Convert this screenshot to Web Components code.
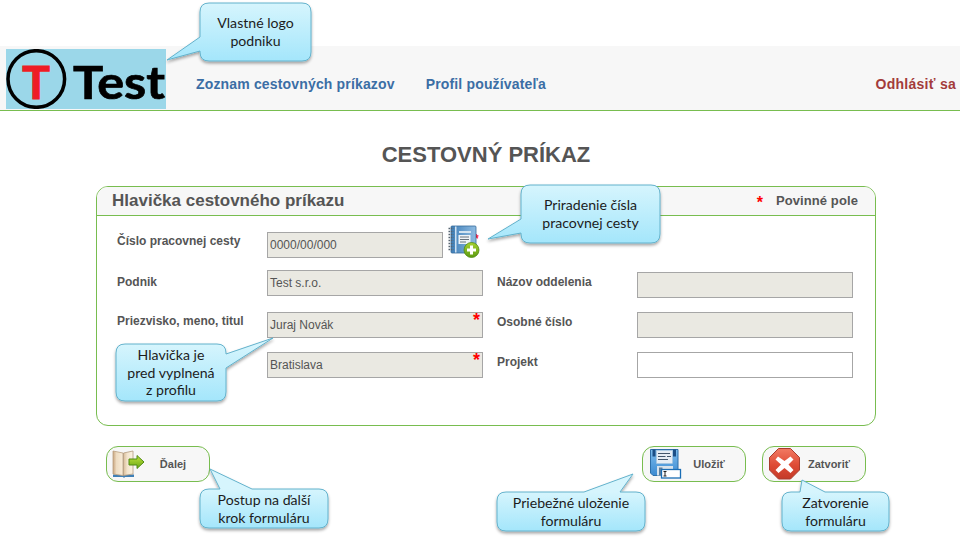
<!DOCTYPE html>
<html lang="sk"><head><meta charset="utf-8"><title>Cestovný príkaz</title>
<style>
html,body{margin:0;padding:0;background:#fff}
body{width:960px;height:544px;overflow:hidden;position:relative;font-family:"Liberation Sans",Arial,sans-serif;color:#555}
</style></head><body>
<x-header>
  <x-logo slot="logo"></x-logo>
  <x-navlink>Zoznam cestovných príkazov</x-navlink>
  <x-navlink>Profil používateľa</x-navlink>
  <x-navlink slot="end" tone="red">Odhlásiť sa</x-navlink>
</x-header>
<x-title>CESTOVNÝ PRÍKAZ</x-title>
<x-panel heading="Hlavička cestovného príkazu" note="Povinné pole">
  <x-row style="margin-top:16px">
    <x-label offset="-4">Číslo pracovnej cesty</x-label>
    <x-assign><x-field>0000/00/000</x-field></x-assign>
  </x-row>
  <x-row style="margin-top:12px">
    <x-label offset="-1">Podnik</x-label><x-field>Test s.r.o.</x-field>
    <x-label offset="-1" style="margin-left:14px">Názov oddelenia</x-label><x-field style="margin-top:2px"></x-field>
  </x-row>
  <x-row style="margin-top:16px">
    <x-label offset="-4">Priezvisko, meno, titul</x-label><x-field required>Juraj Novák</x-field>
    <x-label offset="-3" style="margin-left:14px">Osobné číslo</x-label><x-field></x-field>
  </x-row>
  <x-row style="margin-top:14px">
    <x-label></x-label><x-field required>Bratislava</x-field>
    <x-label offset="-3" style="margin-left:14px">Projekt</x-label><x-field plain></x-field>
  </x-row>
</x-panel>
<x-actions>
  <x-button label="Ďalej"><svg width="36" height="28" viewBox="0 0 36 28" style="margin-left:-1px">
    <defs><linearGradient id="p" x1="0" x2="1" y1="0" y2="0"><stop offset="0" stop-color="#c9a57f"/><stop offset=".35" stop-color="#eedcc2"/><stop offset="1" stop-color="#f8ecd9"/></linearGradient>
    <linearGradient id="p2" x1="0" x2="1" y1="0" y2="0"><stop offset="0" stop-color="#d9bd9a"/><stop offset=".4" stop-color="#f3e4cd"/><stop offset="1" stop-color="#fbf3e4"/></linearGradient>
    <linearGradient id="a" x1="0" x2="0" y1="0" y2="1"><stop offset="0" stop-color="#bfe23c"/><stop offset="1" stop-color="#6aa814"/></linearGradient></defs>
    <path d="M1 24.500h21V27H13l-1 1-1-1H1z" fill="#3f7fb5"/>
    <path d="M1 1 11 3v22.500L1 24z" fill="url(#p)" stroke="#b99f80" stroke-width=".8"/>
    <path d="M11.500 3 21 1v23l-9.500 1.500z" fill="url(#p2)" stroke="#b39a7d" stroke-width=".8"/>
    <path d="M17 9h8V5.500L32 12l-7 6.500V15h-8z" fill="url(#a)" stroke="#4f8a12" stroke-width="1"/>
  </svg></x-button>
  <x-button label="Uložiť" style="margin-left:auto"><svg width="32" height="30" viewBox="0 0 32 30" style="margin-left:1px">
    <defs><linearGradient id="f" x1="0" x2="0" y1="0" y2="1"><stop offset="0" stop-color="#7cbcec"/><stop offset="1" stop-color="#3d8bd2"/></linearGradient></defs>
    <path d="M.5.500h27.500v26H3l-2.500-2.500z" fill="url(#f)" stroke="#2f6fa8"/>
    <rect x="2.500" y=".5" width="3" height="7" fill="#1c4f86"/><rect x="23" y=".5" width="3" height="7" fill="#1c4f86"/>
    <rect x="6.500" y="1.500" width="16" height="13" fill="#e6edf4" stroke="#a9c3da" stroke-width=".5"/>
    <path d="M8 4.500h12M8 7.500h7.500M17 7.500h4M8 10.500h10" stroke="#42566b" stroke-width="1" fill="none"/>
    <rect x="7" y="17" width="16" height="9.500" fill="#d8e3ec"/><rect x="9" y="18.500" width="3.500" height="8" fill="#5f7f9d"/>
    <rect x="11.500" y="20.500" width="19" height="8.500" fill="#fff" stroke="#1a6db5" stroke-width="1.300"/>
    <path d="M13.500 22.500h3M13.500 27h3M15 22.500V27" stroke="#222" stroke-width="1" fill="none"/>
  </svg></x-button>
  <x-button label="Zatvoriť" style="margin-left:16px"><svg width="32" height="32" viewBox="0 0 32 32">
    <defs><linearGradient id="s" x1="0" x2="0" y1="0" y2="1"><stop offset="0" stop-color="#f27a63"/><stop offset=".55" stop-color="#de4b35"/><stop offset="1" stop-color="#c43a28"/></linearGradient></defs>
    <path d="M9.500 .5h12L30.500 9.500v12.500L21.500 31h-12L.5 22V9.500z" fill="url(#s)" stroke="#a93c2e"/>
    <path d="M9 8.500 15.500 13l6-4.500 3 3-5 5 5 5.500-3 3-6-5-6 5-3-3 5.500-5.500-5.500-5z" fill="#fff"/>
  </svg></x-button>
</x-actions>

<x-callout x="200" y="3" w="111" h="58" side="left" a="37" b="51" tx="167" ty="60">Vlastné logo<br>podniku</x-callout>
<x-callout x="521" y="185" w="139" h="58" side="left" a="219" b="233" tx="488" ty="239">Priradenie čísla<br>pracovnej cesty</x-callout>
<x-callout x="116" y="344" w="110" h="57" side="right" a="354" b="368" tx="273" ty="338">Hlavička je<br>pred vyplnená<br>z profilu</x-callout>
<x-callout x="200" y="489" w="128" h="39" side="top" a="220" b="252" tx="210" ty="469">Postup na ďalší<br>krok formuláru</x-callout>
<x-callout x="497" y="492" w="148" h="39" side="top" a="584" b="620" tx="633" ty="474">Priebežné uloženie<br>formuláru</x-callout>
<x-callout x="782" y="492" w="107" h="39" side="top" a="800" b="825" tx="802" ty="480">Zatvorenie<br>formuláru</x-callout>

<script>
function el(name, css, html, init){
  customElements.define(name, class extends HTMLElement{
    constructor(){super();const r=this.attachShadow({mode:'open'});r.innerHTML='<style>'+css+'</style>'+html;}
    connectedCallback(){ if(init) init.call(this,this.shadowRoot); }
  });
}
el('x-header',`:host{display:block;padding-top:46px}
  .bar{height:64px;background:#f7f7f7;border-bottom:1px solid #78bd4f;display:flex;align-items:flex-start;box-sizing:content-box}
  .logo{display:block;margin:3px 0 0 6px}
  nav{display:flex;gap:31px;margin:30px 0 0 30px}
  .end{margin:30px 4px 0 auto}`,
  `<div class="bar"><div class="logo"><slot name="logo"></slot></div><nav><slot></slot></nav><div class="end"><slot name="end"></slot></div></div>`);
el('x-logo',`:host{display:block;width:160px;height:60px}
  svg{display:block}`,
  `<svg width="160" height="60" viewBox="0 0 160 60"><rect width="160" height="60" fill="#9bd7e9"/>
   <circle cx="30.300" cy="30" r="28.300" fill="none" stroke="#000" stroke-width="3.500"/>
   <text x="30" y="50" text-anchor="middle" font-family="Lato,sans-serif" font-weight="700" font-size="46" fill="#ee1c25" stroke="#ee1c25" stroke-width="1.200">T</text>
   <text x="67" y="50" font-family="Lato,sans-serif" font-weight="700" font-size="46" fill="#000" stroke="#000" stroke-width=".7" textLength="92" lengthAdjust="spacingAndGlyphs">Test</text></svg>`);
el('x-navlink',`:host{display:block;font:bold 14px/16px "Liberation Sans",Arial,sans-serif;letter-spacing:.16px;color:#3b6ea5;white-space:nowrap}
  :host([tone=red]){color:#a33b3b;letter-spacing:.27px}`,`<slot></slot>`);
el('x-title',`:host{display:block;text-align:center;font:bold 22px/26px "Liberation Sans",Arial,sans-serif;color:#555;margin:31px 0 0 12px;height:44px}`,`<slot></slot>`);
el('x-panel',`:host{display:block;box-sizing:border-box;width:780px;height:240px;margin-left:96px;border:1px solid #78bd4f;border-radius:12px;overflow:hidden}
  header{height:28px;background:#f7f7f7;border-bottom:1px solid #78bd4f;display:flex;align-items:center;padding:0 17px 0 15px}
  h2{margin:0;font:bold 17px/20px "Liberation Sans",Arial,sans-serif;color:#555;flex:1}
  .star{color:#f00;font:bold 16px/16px "Liberation Sans",Arial,sans-serif;margin-right:13px;padding-top:3px}
  .note{font:bold 13px/16px "Liberation Sans",Arial,sans-serif;letter-spacing:.1px;color:#555}`,
  `<header><h2></h2><span class="star">*</span><span class="note"></span></header><slot></slot>`,
  function(r){r.querySelector('h2').textContent=this.getAttribute('heading');r.querySelector('.note').textContent=this.getAttribute('note');});
el('x-row',`:host{display:flex;align-items:flex-start;padding-left:20px;height:26px}`,`<slot></slot>`);
el('x-label',`:host{display:block;width:150px;flex:none;box-sizing:border-box;font:bold 12px/26px "Liberation Sans",Arial,sans-serif;color:#555;white-space:nowrap}
  :host([style*=margin-left]){width:140px}`,`<slot></slot>`,
  function(){const o=this.getAttribute('offset'); if(o) this.style.transform='translateY('+o+'px)';});
el('x-field',`:host{display:block;position:relative;box-sizing:border-box;width:216px;height:26px;flex:none;background:#eae9e2;border:1px solid #a6a6a6;font:12px/24px "Liberation Sans",Arial,sans-serif;color:#555;padding-left:2px}
  :host([plain]){background:#fff}
  .s{display:none;position:absolute;right:2px;top:-2px;color:#f00;font:bold 18px/18px "Liberation Sans",Arial,sans-serif}
  :host([required]) .s{display:block}`,`<slot></slot><span class="s">*</span>`);
el('x-assign',`:host{display:flex;flex:none;width:216px;position:relative}
  ::slotted(x-field){width:176px}
  svg{position:absolute;left:181px;top:-7px}
  .s{position:absolute;left:207px;top:1px;color:#f00;font:bold 12px/12px "Liberation Sans",Arial,sans-serif}`,
  `<span class="s">*</span><slot></slot><svg width="32" height="34" viewBox="0 0 32 34">
    <defs><linearGradient id="n" x1="0" x2="1" y1="0" y2="0"><stop offset="0" stop-color="#3f7fb9"/><stop offset="1" stop-color="#8fbce2"/></linearGradient>
    <linearGradient id="g" x1="0" x2="0" y1="0" y2="1"><stop offset="0" stop-color="#a9d233"/><stop offset="1" stop-color="#5b9a10"/></linearGradient></defs>
    <rect x="3" y="1" width="25" height="27" rx="1" fill="url(#n)" stroke="#35699b" stroke-width=".8"/>
    <rect x="7" y="1.500" width="1.500" height="26" fill="#cfe2f2"/>
    <rect x="11" y="6" width="12" height="2" fill="#d2e3f1"/>
    <rect x="10.500" y="10" width="12" height="9" fill="#eef3f8"/>
    <path d="M12 12h9M12 14.500h9M12 17h6" stroke="#66727e" stroke-width="1"/>
    <path d="M.5 3.500h5M.5 6.500h5M.5 9.500h5M.5 12.500h5M.5 15.500h5M.5 18.500h5M.5 21.500h5M.5 24.500h5" stroke="#55636f" stroke-width="1.300" stroke-dasharray="1.500 .8"/>
    <circle cx="23.500" cy="25" r="7.500" fill="url(#g)" stroke="#4f8a12" stroke-width=".8"/>
    <path d="M23.500 20.500v9M19 25h9" stroke="#fff" stroke-width="3"/></svg>`);
el('x-actions',`:host{display:flex;box-sizing:border-box;width:780px;margin:20px 0 0 96px;padding:0 10px}`,`<slot></slot>`);
el('x-button',`:host{display:grid;grid-template-columns:38px 44px;align-items:center;box-sizing:border-box;width:104px;height:36px;padding-left:6px;background:#f7f7f7;border:1px solid #78bd4f;border-radius:12px}
  .i{display:flex;align-items:center;height:34px;overflow:visible}
  ::slotted(svg){flex:none;display:block}
  .t{justify-self:center;font:bold 11px/14px "Liberation Sans",Arial,sans-serif;color:#555;white-space:nowrap}`,
  `<div class="i"><slot></slot></div><span class="t"></span>`,
  function(r){r.querySelector('.t').textContent=this.getAttribute('label');});
el('x-callout',`:host{display:block;position:absolute;left:0;top:0;width:0;height:0}
  svg{position:absolute;left:0;top:0;overflow:visible;pointer-events:none}
  .t{position:absolute;display:flex;align-items:center;justify-content:center;text-align:center;font:14.100px/17.600px Lato,"Open Sans",sans-serif;color:#1c1c1c;white-space:nowrap}`,
  `<svg width="960" height="544"><defs><linearGradient gradientUnits="userSpaceOnUse" x1="0" x2="0"><stop offset="0" stop-color="#d6f5fd"/><stop offset="1" stop-color="#a4e6fb"/></linearGradient>
   <filter x="-20%" y="-20%" width="140%" height="150%"><feDropShadow dx="0" dy="2" stdDeviation="1.500" flood-color="#000" flood-opacity=".35"/></filter></defs><path stroke="#63b2cc" stroke-width="1"/></svg><div class="t"><slot></slot></div>`,
  function(r){
    const g=n=>+this.getAttribute(n), x=g('x'),y=g('y'),w=g('w'),h=g('h'),a=g('a'),b=g('b'),tx=g('tx'),ty=g('ty'),c=9,s=this.getAttribute('side');
    const X=x+w,Y=y+h, id=this.getAttribute('x')+'_'+this.getAttribute('y');
    let d=`M${x+c} ${y}`;
    if(s==='top') d+=`H${a}L${tx} ${ty}L${b} ${y}`;
    d+=`H${X-c}Q${X} ${y} ${X} ${y+c}`;
    if(s==='right') d+=`V${a}L${tx} ${ty}L${X} ${b}`;
    d+=`V${Y-c}Q${X} ${Y} ${X-c} ${Y}H${x+c}Q${x} ${Y} ${x} ${Y-c}`;
    if(s==='left') d+=`V${b}L${tx} ${ty}L${x} ${a}`;
    d+=`V${y+c}Q${x} ${y} ${x+c} ${y}Z`;
    const lg=r.querySelector('linearGradient'),f=r.querySelector('filter'),p=r.querySelector('path');
    lg.id='cg'+id;lg.setAttribute('y1',y);lg.setAttribute('y2',Y);f.id='cf'+id;
    p.setAttribute('d',d);p.setAttribute('fill','url(#cg'+id+')');p.setAttribute('filter','url(#cf'+id+')');
    const t=r.querySelector('.t');t.style.cssText+=`left:${x}px;top:${y}px;width:${w}px;height:${h}px`;
  });
</script>
</body></html>
